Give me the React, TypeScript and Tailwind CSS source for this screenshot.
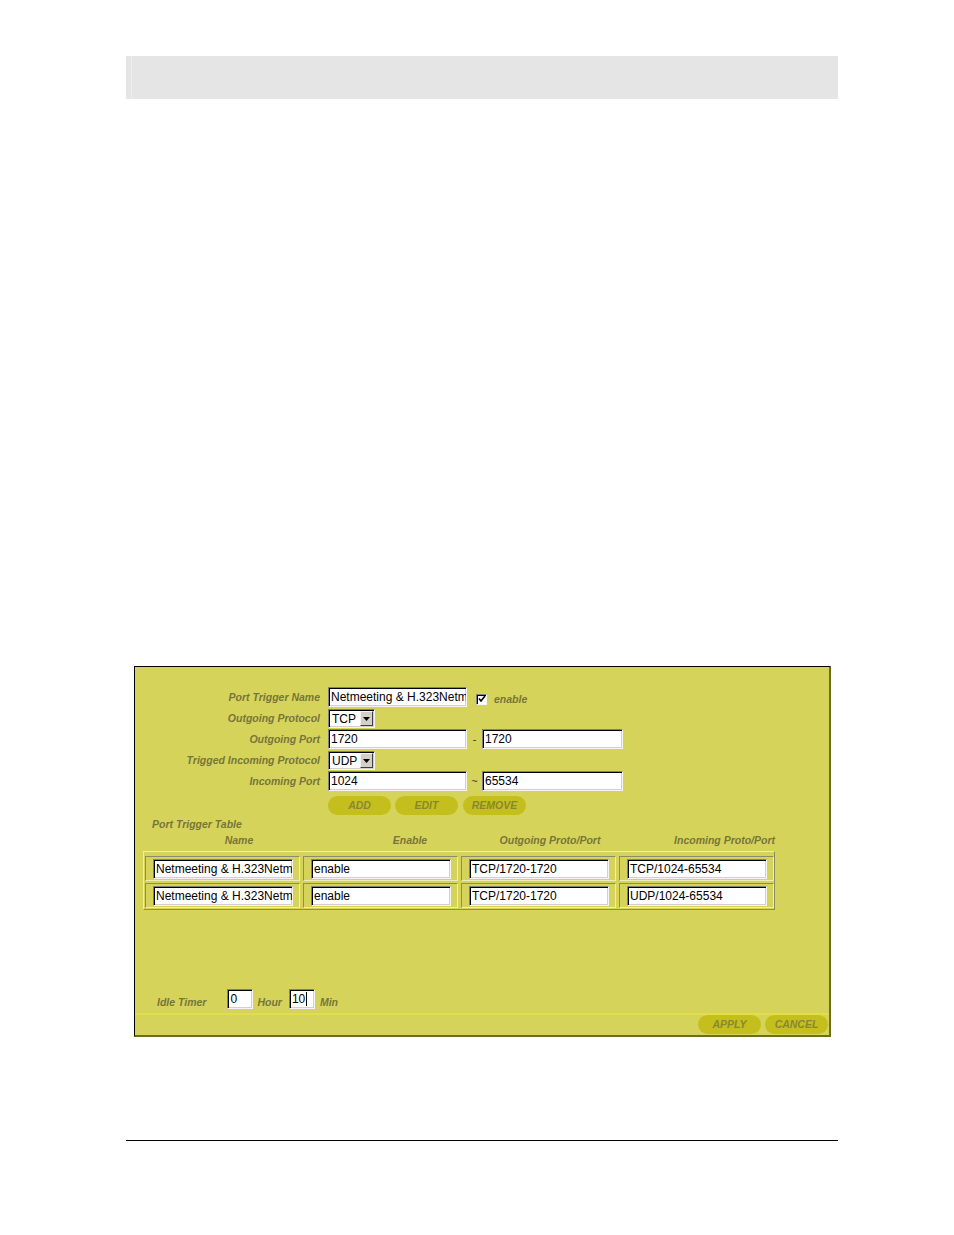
import React from "react";

const F = { fontFamily: '"Liberation Sans", Arial, sans-serif' };

const lbl = "italic font-bold text-[10.5px] leading-none text-[#76763a] whitespace-nowrap";

function TextBox({ value, w, h = 20, cursor = false }: { value: string; w: number; h?: number; cursor?: boolean }) {
  return (
    <div
      className="flex items-center bg-white border border-t-[#808080] border-l-[#808080] border-r-[#f4f4f4] border-b-[#f4f4f4] shadow-[inset_1px_1px_0_#000,inset_-1px_-1px_0_#d4d0c8] overflow-hidden whitespace-nowrap pl-[2px] text-[12px] leading-none text-black"
      style={{ width: w, height: h }}
    >
      {value}
      {cursor && <span className="inline-block w-px h-[14px] bg-black ml-[1px]" />}
    </div>
  );
}

function SelectBox({ value }: { value: string }) {
  return (
    <div className="flex items-center w-[47px] h-[19px] bg-white border border-t-[#808080] border-l-[#808080] border-r-[#f4f4f4] border-b-[#f4f4f4] shadow-[inset_1px_1px_0_#000,inset_-1px_-1px_0_#d4d0c8]">
      <span className="flex-1 pl-[3px] text-[12px] leading-none text-black">{value}</span>
      <div className="mr-[1px] w-[13px] h-[15px] bg-[#d4d0c8] border border-t-[#f4f4f4] border-l-[#f4f4f4] border-r-[#404040] border-b-[#404040] flex items-center justify-center">
        <svg width="7" height="4" viewBox="0 0 7 4">
          <polygon points="0,0 7,0 3.5,4" fill="#000" />
        </svg>
      </div>
    </div>
  );
}

function Btn({ label }: { label: string }) {
  return (
    <div className="w-[63px] h-[19px] rounded-full bg-[#c4bf1c] flex items-center justify-center italic font-bold text-[10.5px] leading-none text-[#8a8733]">
      {label}
    </div>
  );
}

function Row({ label, children, mt }: { label: string; children: React.ReactNode; mt: string }) {
  return (
    <div className={`flex items-center ${mt}`}>
      <div className={`w-[185px] text-right ${lbl}`}>{label}</div>
      <div className="ml-[8px] flex items-center">{children}</div>
    </div>
  );
}

function Cell({ value }: { value: string }) {
  return (
    <div className="w-[155px] h-[25px] flex items-center pl-[7px] border border-t-[#8c8c6c] border-l-[#8c8c6c] border-r-[#eeecb8] border-b-[#eeecb8]">
      <TextBox value={value} w={140} h={20} />
    </div>
  );
}

export default function App() {
  const rows = [
    ["Netmeeting & H.323Netmeeting", "enable", "TCP/1720-1720", "TCP/1024-65534"],
    ["Netmeeting & H.323Netmeeting", "enable", "TCP/1720-1720", "UDP/1024-65534"],
  ];
  return (
    <div className="w-[954px] h-[1235px] bg-white" style={F}>
      <div className="pl-[126px] pr-[116px] pt-[56px]">
        <div className="h-[43px] bg-[#e5e5e5] flex">
          <div className="ml-[5px] w-px h-full bg-[#efefef]" />
        </div>

        <div className="ml-[8px] mt-[567px] w-[697px] h-[371px] bg-[#d6d35a] border-l border-t border-l-black border-t-black border-r-2 border-b-2 border-r-[#6e6d22] border-b-[#6e6d22] flex flex-col">
          <div className="pt-[20px]">
            <Row label="Port Trigger Name" mt="mt-0">
              <TextBox value="Netmeeting & H.323Netmeeting" w={139} />
              <div className="ml-[9px] mt-[4px] w-[11px] h-[11px] bg-white border border-t-[#808080] border-l-[#808080] border-r-[#f4f4f4] border-b-[#f4f4f4] shadow-[inset_1px_1px_0_#000] flex items-center justify-center">
                <svg width="8" height="8" viewBox="0 0 8 8">
                  <polyline points="1,3.5 3,6 7,1" fill="none" stroke="#000" strokeWidth="1.6" />
                </svg>
              </div>
              <span className={`ml-[7px] mt-[5px] ${lbl}`}>enable</span>
            </Row>
            <Row label="Outgoing Protocol" mt="mt-[2px]">
              <SelectBox value="TCP" />
            </Row>
            <Row label="Outgoing Port" mt="mt-[1px]">
              <TextBox value="1720" w={139} />
              <span className="w-[15px] text-center text-[11px] leading-none text-[#333]">-</span>
              <TextBox value="1720" w={141} />
            </Row>
            <Row label="Trigged Incoming Protocol" mt="mt-[2px]">
              <SelectBox value="UDP" />
            </Row>
            <Row label="Incoming Port" mt="mt-[1px]">
              <TextBox value="1024" w={139} />
              <span className="w-[15px] text-center text-[11px] leading-none text-[#333]">~</span>
              <TextBox value="65534" w={141} />
            </Row>
            <div className="flex mt-[5px] ml-[193px] gap-[4px]">
              <Btn label="ADD" />
              <Btn label="EDIT" />
              <div className="ml-[1px]">
                <Btn label="REMOVE" />
              </div>
            </div>
          </div>

          <div className={`mt-[3px] ml-[17px] h-[12px] flex items-center ${lbl}`}>Port Trigger Table</div>
          <div className="mt-[4px] ml-[8px] h-[12px] flex items-center">
            <div className={`w-[192px] text-center ${lbl}`}>Name</div>
            <div className={`w-[150px] text-center ${lbl}`}>Enable</div>
            <div className={`w-[130px] text-center ${lbl}`}>Outgoing Proto/Port</div>
            <div className={`w-[160px] text-right ${lbl}`}>Incoming Proto/Port</div>
          </div>

          <div className="mt-[5px] ml-[8px] w-[632px] border border-t-[#eeecb8] border-l-[#eeecb8] border-r-[#8c8c6c] border-b-[#8c8c6c] pt-[4px] pb-[1px] pl-[1px] flex flex-col gap-[2px]">
            {rows.map((r, i) => (
              <div key={i} className="flex gap-[3px]">
                {r.map((c, j) => (
                  <Cell key={j} value={c} />
                ))}
              </div>
            ))}
          </div>

          <div className="flex-1" />

          <div className="flex items-center ml-[22px] h-[20px]">
            <span className={`mt-[6px] ${lbl}`}>Idle Timer</span>
            <div className="ml-[21px]">
              <TextBox value="0" w={26} />
            </div>
            <span className={`ml-[4px] mt-[6px] ${lbl}`}>Hour</span>
            <div className="ml-[7px]">
              <TextBox value="10" w={26} cursor />
            </div>
            <span className={`ml-[5px] mt-[6px] ${lbl}`}>Min</span>
          </div>
          <div className="mt-[4px] h-[2px] bg-[#e2de46]" />
          <div className="flex justify-end gap-[4px] pr-[1px] mb-[1px]">
            <Btn label="APPLY" />
            <Btn label="CANCEL" />
          </div>
        </div>

        <div className="mt-[103px] h-px bg-black" />
      </div>
    </div>
  );
}
